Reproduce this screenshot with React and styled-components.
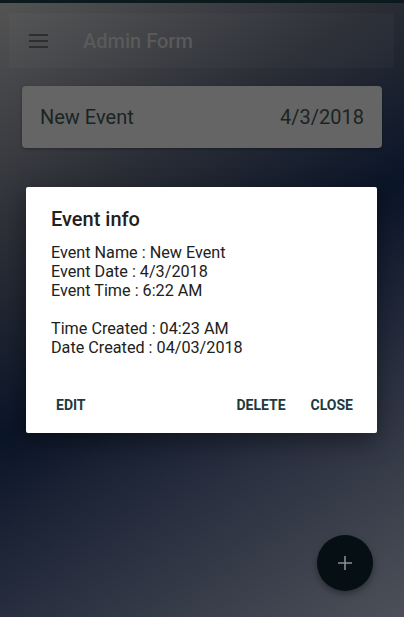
import styled, { createGlobalStyle } from "styled-components";

const Global = createGlobalStyle`
  html, body { margin: 0; padding: 0; }
  body { font-family: Roboto, "Noto Sans", sans-serif; }
`;

const INFO = [
  "Event Name : New Event",
  "Event Date : 4/3/2018",
  "Event Time : 6:22 AM",
  null,
  "Time Created : 04:23 AM",
  "Date Created : 04/03/2018",
];

function App() {
  return (
    <Page>
      <Global />
      <StatusStrip />
      <AppBar>
        <Burger>
          <span />
          <span />
          <span />
        </Burger>
        <BarTitle>Admin Form</BarTitle>
      </AppBar>
      <EventCard>
        <CardText>New Event</CardText>
        <CardText>4/3/2018</CardText>
      </EventCard>

      <Overlay>
        <Dialog>
          <DialogTitle>Event info</DialogTitle>
          <Body>
            {INFO.map((line, i) =>
              line ? <Line key={i}>{line}</Line> : <Blank key={i} />
            )}
          </Body>
          <Actions>
            <ActionButton>EDIT</ActionButton>
            <Spacer />
            <ActionButton>DELETE</ActionButton>
            <ActionButton>CLOSE</ActionButton>
          </Actions>
        </Dialog>
      </Overlay>

      <Fab>
        <svg width="16" height="16" viewBox="0 0 16 16">
          <path d="M8 1v14M1 8h14" stroke="#8a8d90" strokeWidth="1.6" />
        </svg>
      </Fab>
    </Page>
  );
}

export default App;

const Page = styled.div`
  position: relative;
  width: 100%;
  min-height: 100vh;
  overflow: hidden;
  display: flex;
  flex-direction: column;
  background: linear-gradient(
    147deg,
    #545454 0%,
    #2b2e36 28%,
    #0b1528 50%,
    #2a3040 72%,
    #4d5058 100%
  );
`;

const StatusStrip = styled.div`
  height: 3px;
  background: #0b1a1c;
`;

const AppBar = styled.div`
  margin: 10px 10px 0 9px;
  height: 55px;
  display: flex;
  align-items: center;
  background: rgba(255, 255, 255, 0.025);
  padding-left: 20px;
`;

const Burger = styled.div`
  width: 19px;
  display: flex;
  flex-direction: column;
  gap: 4px;
  span {
    display: block;
    height: 2px;
    background: #2e2e2e;
  }
`;

const BarTitle = styled.div`
  margin-left: 35px;
  font-size: 20px;
  font-weight: 500;
  color: #5a5a5a;
`;

const EventCard = styled.div`
  margin: 18px 22px 0 22px;
  height: 62px;
  border-radius: 4px;
  background: #656565;
  display: flex;
  align-items: center;
  justify-content: space-between;
  padding: 0 18px;
  box-shadow: 0 1px 3px rgba(0, 0, 0, 0.3);
`;

const CardText = styled.div`
  font-size: 20px;
  color: #1a2424;
`;

const Overlay = styled.div`
  position: absolute;
  inset: 0;
  display: flex;
  justify-content: flex-start;
  align-items: flex-start;
  padding: 187px 0 0 26px;
`;

const Dialog = styled.div`
  width: 351px;
  height: 246px;
  box-sizing: border-box;
  background: #ffffff;
  border-radius: 2px;
  padding: 20px 0 0 25px;
  display: flex;
  flex-direction: column;
  box-shadow: 0 8px 24px rgba(0, 0, 0, 0.4);
`;

const DialogTitle = styled.div`
  font-size: 20px;
  font-weight: 500;
  line-height: 24px;
  color: #212121;
`;

const Body = styled.div`
  margin-top: 12px;
  display: flex;
  flex-direction: column;
`;

const Line = styled.div`
  font-size: 16.2px;
  line-height: 19px;
  color: #212121;
`;

const Blank = styled.div`
  height: 19px;
`;

const Actions = styled.div`
  margin-top: auto;
  margin-bottom: 18px;
  margin-left: -7px;
  padding-right: 12px;
  display: flex;
  align-items: center;
  gap: 1px;
`;

const Spacer = styled.div`
  flex: 1;
`;

const ActionButton = styled.div`
  padding: 0 12px;
  font-size: 14px;
  font-weight: 700;
  color: #1d3a40;
  line-height: 20px;
`;

const Fab = styled.div`
  position: absolute;
  left: 317px;
  top: 535px;
  width: 56px;
  height: 56px;
  border-radius: 50%;
  background: #061014;
  display: flex;
  align-items: center;
  justify-content: center;
  box-shadow: 0 3px 6px rgba(0, 0, 0, 0.35);
`;
